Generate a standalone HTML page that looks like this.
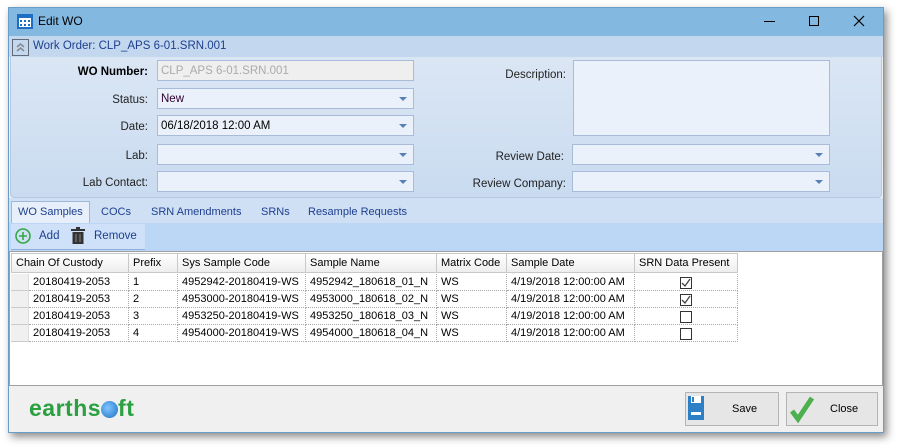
<!DOCTYPE html>
<html><head><style>
*{box-sizing:border-box;margin:0;padding:0}
body{width:900px;height:448px;background:#fff;font-family:"Liberation Sans",sans-serif;font-size:12px;color:#000;position:relative;overflow:hidden}
.abs{position:absolute;white-space:nowrap}
.win{left:8px;top:7px;width:876px;height:426px;background:#f0f0f0;border:1px solid #6a9cc9;box-shadow:3px 4px 8px rgba(0,0,0,.45)}
.lbl{position:absolute;text-align:right;font-size:11.5px;color:#222;white-space:nowrap}
.fld{position:absolute;height:21px;background:#eaf1fa;border:1px solid #a8bcd9;font-size:11.5px;padding:4px 0 0 3px;white-space:nowrap}
.dd::after{content:"";position:absolute;right:6px;top:8px;border-left:4px solid transparent;border-right:4px solid transparent;border-top:4px solid #5a7fb5}
.th{position:absolute;top:253px;height:20px;background:linear-gradient(#fff,#eeeeee);border:1px solid #c8c8c8;border-left:none;padding:3px 0 0 4px;font-size:11px;white-space:nowrap;overflow:hidden}
.td{position:absolute;height:17px;font-size:11px;padding:2px 0 0 4px;border-right:1px dotted #aaa;border-bottom:1px dotted #aaa;white-space:nowrap;overflow:hidden}
.cb{position:absolute;width:12px;height:12px;border:1px solid #333;background:#fff;left:680px}
.tab{position:absolute;top:206px;color:#1d3f8e;font-size:11px;white-space:nowrap}
</style></head><body>
<div class="abs win"></div>
<div class="abs" style="left:9px;top:8px;width:874px;height:28px;background:#83b8e1"></div>
<svg class="abs" style="left:17px;top:13px" width="16" height="16"><rect x="1" y="2" width="14" height="13" fill="#fff" stroke="#1c6fc4" stroke-width="2"/><rect x="1" y="2" width="14" height="3" fill="#1c6fc4"/><g fill="#1c6fc4"><rect x="3" y="7" width="2" height="2"/><rect x="7" y="7" width="2" height="2"/><rect x="11" y="7" width="2" height="2"/><rect x="3" y="11" width="2" height="2"/><rect x="7" y="11" width="2" height="2"/><rect x="11" y="11" width="2" height="2"/></g></svg>
<div class="abs" style="left:38px;top:14px;font-size:12px">Edit WO</div>
<div class="abs" style="left:764px;top:21px;width:11px;height:1px;background:#000"></div>
<div class="abs" style="left:809px;top:16px;width:10px;height:10px;border:1px solid #000"></div>
<svg class="abs" style="left:853px;top:15px" width="12" height="12"><path d="M1 1L11 11M11 1L1 11" stroke="#000" stroke-width="1.2"/></svg>
<div class="abs" style="left:9px;top:36px;width:874px;height:21px;background:#c3d8ef"></div>
<svg class="abs" style="left:12px;top:39px" width="17" height="17"><rect x="0.5" y="0.5" width="16" height="16" fill="none" stroke="#000" stroke-dasharray="1 1"/><path d="M5 8L8.5 5L12 8M5 12L8.5 9L12 12" fill="none" stroke="#888" stroke-width="1.5"/></svg>
<div class="abs" style="left:33px;top:40px;color:#1d3f8e;font-size:11.5px">Work Order: CLP_APS 6-01.SRN.001</div>
<div class="abs" style="left:10px;top:57px;width:872px;height:141px;background:linear-gradient(#dbe6f4,#c9dbf0);border:1px solid #b6c9e3;border-top:none;border-radius:0 0 4px 4px"></div>
<div class="lbl" style="left:40px;top:66px;width:108px;font-weight:bold;color:#000">WO Number:</div>
<div class="fld" style="left:157px;top:60px;width:257px;background:#efefef;color:#aaa">CLP_APS 6-01.SRN.001</div>
<div class="lbl" style="left:40px;top:94px;width:108px">Status:</div>
<div class="fld dd" style="left:157px;top:88px;width:257px;color:#300030">New</div>
<div class="lbl" style="left:40px;top:121px;width:108px">Date:</div>
<div class="fld dd" style="left:157px;top:115px;width:257px">06/18/2018 12:00 AM</div>
<div class="lbl" style="left:40px;top:150px;width:108px">Lab:</div>
<div class="fld dd" style="left:157px;top:144px;width:257px"></div>
<div class="lbl" style="left:40px;top:177px;width:108px">Lab Contact:</div>
<div class="fld dd" style="left:157px;top:171px;width:257px"></div>
<div class="lbl" style="left:440px;top:69px;width:126px">Description:</div>
<div class="fld" style="left:573px;top:60px;width:257px;height:76px"></div>
<div class="lbl" style="left:440px;top:151px;width:124px">Review Date:</div>
<div class="fld dd" style="left:572px;top:144px;width:258px"></div>
<div class="lbl" style="left:440px;top:178px;width:126px">Review Company:</div>
<div class="fld dd" style="left:572px;top:171px;width:258px"></div>
<div class="abs" style="left:9px;top:198px;width:874px;height:25px;background:#cfe0f5"></div>
<div class="abs" style="left:11px;top:201px;width:79px;height:23px;background:#e6effa;border:1px solid #9fb8d8;border-bottom:none"></div>
<div class="tab" style="left:18px">WO Samples</div>
<div class="tab" style="left:101px">COCs</div>
<div class="tab" style="left:151px">SRN Amendments</div>
<div class="tab" style="left:261px">SRNs</div>
<div class="tab" style="left:308px">Resample Requests</div>
<div class="abs" style="left:9px;top:223px;width:874px;height:28px;background:#bcd6f6"></div>
<div class="abs" style="left:11px;top:224px;width:134px;height:26px;background:#cfe1f8;border-bottom:1px solid #8fb0da"></div>
<svg class="abs" style="left:15px;top:228px" width="16" height="16"><circle cx="8" cy="8" r="7" fill="none" stroke="#35a845" stroke-width="1.6"/><path d="M8 4V12M4 8H12" stroke="#35a845" stroke-width="1.6"/></svg>
<div class="abs" style="left:39px;top:230px;color:#1d3f8e;font-size:11.5px">Add</div>
<svg class="abs" style="left:71px;top:227px" width="14" height="17"><rect x="0" y="2" width="14" height="2" fill="#333"/><rect x="5" y="0" width="4" height="2" fill="#333"/><rect x="1.5" y="5" width="11" height="12" fill="#333"/><path d="M5 7V15M9 7V15" stroke="#888" stroke-width="1"/></svg>
<div class="abs" style="left:94px;top:230px;color:#1d3f8e;font-size:11.5px">Remove</div>
<div class="abs" style="left:9px;top:251px;width:874px;height:135px;background:#fff;border:1px solid #a0a0a0"></div>
<div class="th" style="left:11px;width:118px;border-left:1px solid #c8c8c8">Chain Of Custody</div>
<div class="th" style="left:129px;width:49px">Prefix</div>
<div class="th" style="left:178px;width:128px">Sys Sample Code</div>
<div class="th" style="left:306px;width:131px">Sample Name</div>
<div class="th" style="left:437px;width:70px">Matrix Code</div>
<div class="th" style="left:507px;width:128px">Sample Date</div>
<div class="th" style="left:635px;width:103px">SRN Data Present</div>
<div id="rows"></div>
<script>
var d=[["1","4952942","01",1],["2","4953000","02",1],["3","4953250","03",0],["4","4954000","04",0]],h="";
d.forEach(function(r,i){var y=274+i*17;
h+='<div class="abs" style="left:11px;top:'+y+'px;width:18px;height:17px;background:#f0f0f0;border-bottom:1px solid #ccc;border-right:1px solid #ddd"></div>';
h+='<div class="td" style="left:29px;top:'+y+'px;width:100px">20180419-2053</div>';
h+='<div class="td" style="left:129px;top:'+y+'px;width:49px">'+r[0]+'</div>';
h+='<div class="td" style="left:178px;top:'+y+'px;width:128px">'+r[1]+'-20180419-WS</div>';
h+='<div class="td" style="left:306px;top:'+y+'px;width:131px">'+r[1]+'_180618_'+r[2]+'_N</div>';
h+='<div class="td" style="left:437px;top:'+y+'px;width:70px">WS</div>';
h+='<div class="td" style="left:507px;top:'+y+'px;width:128px">4/19/2018 12:00:00 AM</div>';
h+='<div class="td" style="left:635px;top:'+y+'px;width:103px"></div>';
h+='<div class="cb" style="top:'+(y+3)+'px">'+(r[3]?'<svg width="10" height="10" style="position:absolute;left:0;top:0"><path d="M1 5L4 8L9 1" fill="none" stroke="#444" stroke-width="1.3"/></svg>':'')+'</div>';});
document.getElementById("rows").innerHTML=h;
</script>
<div class="abs" style="left:29px;top:395px;font-size:23px;font-weight:bold;color:#2aa040;letter-spacing:0.5px">earths<span style="display:inline-block;width:17px;height:17px;border-radius:50%;background:radial-gradient(circle at 40% 40%,#7fc6ff,#1a6fc0);vertical-align:-2px"></span>ft</div>
<div class="abs" style="left:685px;top:392px;width:94px;height:34px;border:1px solid #b4b4b4;background:#e6e6e6"></div>
<svg class="abs" style="left:688px;top:396px" width="18" height="25"><rect x="0" y="0" width="16" height="24" fill="#2d7fc6"/><rect x="3" y="0" width="10" height="7" fill="#fff"/><rect x="4" y="1" width="2" height="5" fill="#2d7fc6"/><rect x="3" y="16" width="10" height="3" fill="#fff"/></svg>
<div class="abs" style="left:732px;top:403px;font-size:11px">Save</div>
<div class="abs" style="left:786px;top:392px;width:92px;height:34px;border:1px solid #b4b4b4;background:#e6e6e6"></div>
<svg class="abs" style="left:789px;top:395px" width="26" height="28"><path d="M3 16L9 24L23 3" fill="none" stroke="#4cb04f" stroke-width="5"/></svg>
<div class="abs" style="left:830px;top:403px;font-size:11px">Close</div>
</body></html>
